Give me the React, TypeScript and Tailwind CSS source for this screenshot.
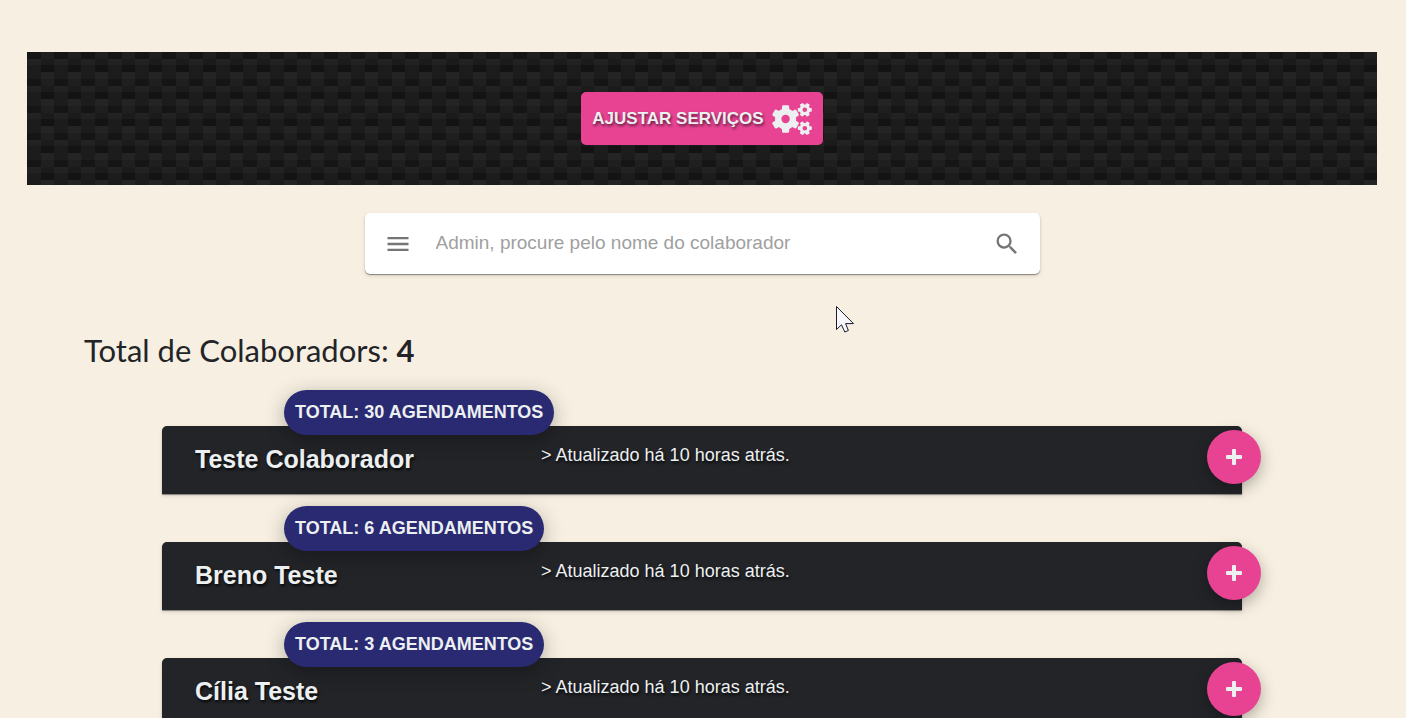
import React from "react";
import { MdMenu, MdSearch } from "react-icons/md";

type Collaborator = { name: string; total: number; updated: string };

const collaborators: Collaborator[] = [
  { name: "Teste Colaborador", total: 30, updated: "há 10 horas atrás." },
  { name: "Breno Teste", total: 6, updated: "há 10 horas atrás." },
  { name: "Cília Teste", total: 3, updated: "há 10 horas atrás." },
];

const toothAngles = [0, 60, 120, 180, 240, 300];

function GearsIcon() {
  return (
    <svg viewBox="0 0 40 32" className="h-8 w-10" fill="currentColor" aria-hidden="true">
      <g transform="translate(13.6 16)">
        <circle r="7.4" fill="none" stroke="currentColor" strokeWidth="6.4" />
        {toothAngles.map((angle) => (
          <rect key={angle} x="-3.6" y="-13.8" width="7.2" height="6.4" rx="1.4" transform={`rotate(${angle})`} />
        ))}
      </g>
      {[6.8, 25.2].map((y) => (
        <g key={y} transform={`translate(32.8 ${y})`}>
          <circle r="3.8" fill="none" stroke="currentColor" strokeWidth="3" />
          {toothAngles.map((angle) => (
            <rect key={angle} x="-1.9" y="-7" width="3.8" height="3.4" rx="0.8" transform={`rotate(${angle + 30})`} />
          ))}
        </g>
      ))}
    </svg>
  );
}

function ServicesBanner() {
  return (
    <section className="relative isolate flex justify-center bg-[linear-gradient(#1f1f1f_7px,#1b1b1b_7px,#1b1b1b_13px,#131313_13px,#131313_20px,#242424_20px)] bg-[size:27px_27px] py-10">
      <div className="absolute inset-0 -z-10 bg-[linear-gradient(#151515_7px,#232323_7px,#212121_13px,#1c1c1c_13px)] bg-[size:27px_27px] [mask-image:linear-gradient(90deg,#000_14px,transparent_14px)] [mask-size:27px_27px]" />
      <button
        type="button"
        className="flex h-[53px] items-center gap-2 rounded-[5px] bg-[#e84393] px-[11px] text-[17px] font-bold text-[#ecf0f1] uppercase"
      >
        <span className="[text-shadow:1px_2px_3px_rgba(0,0,0,0.6)]">Ajustar Serviços</span>
        <GearsIcon />
      </button>
    </section>
  );
}

function SearchBar() {
  return (
    <form
      role="search"
      onSubmit={(event) => event.preventDefault()}
      className="mx-auto mt-7 flex h-[61px] w-1/2 items-center rounded-[5px] bg-white px-[19px] text-[#757575] shadow-[0_1px_1px_rgba(0,0,0,0.4),0_2px_4px_rgba(0,0,0,0.12)]"
    >
      <button type="button" aria-label="Menu">
        <MdMenu className="size-7" />
      </button>
      <input
        type="text"
        aria-label="Nome do colaborador"
        placeholder="Admin, procure pelo nome do colaborador"
        className="ml-6 min-w-0 flex-1 bg-transparent text-[19px] text-[#333] outline-none placeholder:text-[#a0a0a0]"
      />
      <button type="submit" aria-label="Buscar">
        <MdSearch className="size-7" />
      </button>
    </form>
  );
}

function CollaboratorCard({ name, total, updated }: Collaborator) {
  return (
    <li className="relative flex h-[68px] rounded-t-[5px] bg-[#232428] text-[#ecf0f1] shadow-[0_1px_1px_rgba(0,0,0,0.4),0_2px_4px_rgba(0,0,0,0.12)]">
      <h2 className="w-[379px] shrink-0 pt-4 pl-[33px] text-[25px] leading-[34px] font-bold [text-shadow:1px_2px_3px_rgba(0,0,0,0.8)]">
        {name}
      </h2>
      <p className="pt-4 text-[18px] leading-[26px] [text-shadow:1px_2px_3px_rgba(0,0,0,0.8)]">
        &gt; Atualizado {updated}
      </p>
      <span className="absolute -top-9 left-[122px] flex h-[45px] items-center rounded-full bg-[#2a2a72] px-[11px] text-[18px] font-bold whitespace-nowrap uppercase shadow-[0_5px_20px_rgba(0,0,0,0.3)]">
        Total: {total} agendamentos
      </span>
      <button
        type="button"
        aria-label={"Expandir " + name}
        className="absolute top-1 -right-[19px] flex size-[54px] items-center justify-center rounded-full bg-[#e84393] shadow-[0_5px_16px_rgba(0,0,0,0.3)]"
      >
        <svg viewBox="0 0 16 16" className="size-4" fill="currentColor" aria-hidden="true">
          <rect x="6" y="0" width="4" height="16" rx="1" />
          <rect x="0" y="6" width="16" height="4" rx="1" />
        </svg>
      </button>
    </li>
  );
}

function Pointer() {
  return (
    <svg
      viewBox="0 0 20 28"
      className="pointer-events-none absolute top-[305px] left-[835px] h-7 w-5"
      aria-hidden="true"
    >
      <path
        d="M1.5 1.5V24.5L6.5 19.8L9.8 27L13.4 25.5L10.6 18.6H18.5Z"
        fill="#f8f8fb"
        stroke="#1b1b35"
        strokeWidth="1"
      />
    </svg>
  );
}

export default function App() {
  return (
    <main className="relative min-h-screen bg-[#f7f0e2] pt-[52px] pr-[29px] pl-[27px] font-['Liberation_Sans',Arial,sans-serif]">
      <ServicesBanner />
      <SearchBar />
      <h1 className="mt-14 ml-[57px] font-[Lato,sans-serif] text-[31px] leading-10 text-[#232428]">
        Total de Colaboradors: <strong>4</strong>
      </h1>
      <ul className="mx-auto mt-14 flex w-4/5 flex-col gap-12">
        {collaborators.map((item) => (
          <CollaboratorCard key={item.name} {...item} />
        ))}
      </ul>
      <Pointer />
    </main>
  );
}
